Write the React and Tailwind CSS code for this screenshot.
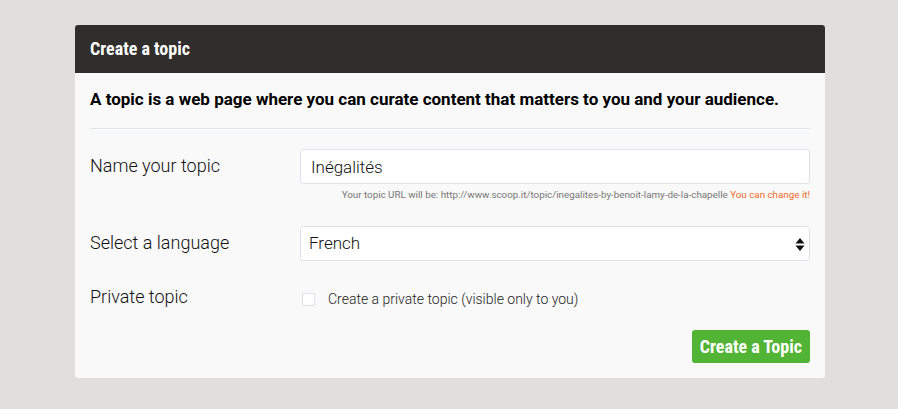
import React from "react";

const narrow = { fontFamily: '"Liberation Sans Narrow", "Roboto Condensed", Roboto, sans-serif' };

const App = () => {
  return (
    <div className="min-h-[409px] bg-[#e0dfdd] pt-[25px] font-['Roboto',sans-serif]">
      <div className="ml-[75px] w-[750px] overflow-hidden rounded-[3px] bg-[#f9f9f9]">
        <div className="flex h-[48px] items-center bg-[#302e2c] px-[15px] pb-[1px]">
          <h1 className="text-[18px] font-bold text-white" style={narrow}>Create a topic</h1>
        </div>

        <div className="px-[15px] pb-[15px]">
          <p className="pt-[16px] pb-[19px] text-[17px] leading-[20px] font-bold text-black">
            A topic is a web page where you can curate content that matters to you and your audience.
          </p>
          <div className="h-px bg-[#dde5ee]" />

          <div className="mt-[20px] flex">
            <label className="w-[210px] pt-[7px] text-[18px] leading-[20px] font-light text-[#111]">Name your topic</label>
            <div className="flex-1">
              <input
                type="text"
                defaultValue="Inégalités"
                className="h-[35px] w-full rounded-[3px] border border-[#dfe3e8] bg-white px-[10px] text-[17px] font-light text-[#111] outline-none"
              />
              <p className="mt-[5px] text-right text-[9.8px] leading-[12px] text-[#777]">
                Your topic URL will be: http://www.scoop.it/topic/inegalites-by-benoit-lamy-de-la-chapelle{" "}
                <span className="text-[#f26b2a]">You can change it!</span>
              </p>
            </div>
          </div>

          <div className="mt-[25px] flex">
            <label className="w-[210px] pt-[7px] text-[18px] leading-[20px] font-light text-[#111]">Select a language</label>
            <div className="relative flex h-[35px] flex-1 items-center rounded-[3px] border border-[#dfe3e8] bg-white px-[8px]">
              <span className="text-[17px] font-light text-[#111]">French</span>
              <svg className="absolute right-[4px] top-[11px]" width="10" height="13" viewBox="0 0 10 13">
                <path d="M5 0 L9.5 5.5 L0.5 5.5 Z M0.5 7.5 L9.5 7.5 L5 13 Z" fill="#111" />
              </svg>
            </div>
          </div>

          <div className="mt-[25px] flex items-start">
            <label className="w-[210px] pt-[1px] text-[18px] leading-[20px] font-light text-[#111]">Private topic</label>
            <label className="flex items-center gap-[13px] pt-[3px] pl-[2px]">
              <span className="h-[13px] w-[13px] border border-[#dfe3e8] bg-white" />
              <span className="text-[14px] font-light text-[#222]">Create a private topic (visible only to you)</span>
            </label>
          </div>

          <div className="mt-[20px] flex justify-end">
            <button
              className="h-[33px] rounded-[3px] bg-[#52b435] px-[8px] text-[18px] font-bold text-white"
              style={narrow}
            >
              Create a Topic
            </button>
          </div>
        </div>
      </div>
    </div>
  );
};

export default App;
